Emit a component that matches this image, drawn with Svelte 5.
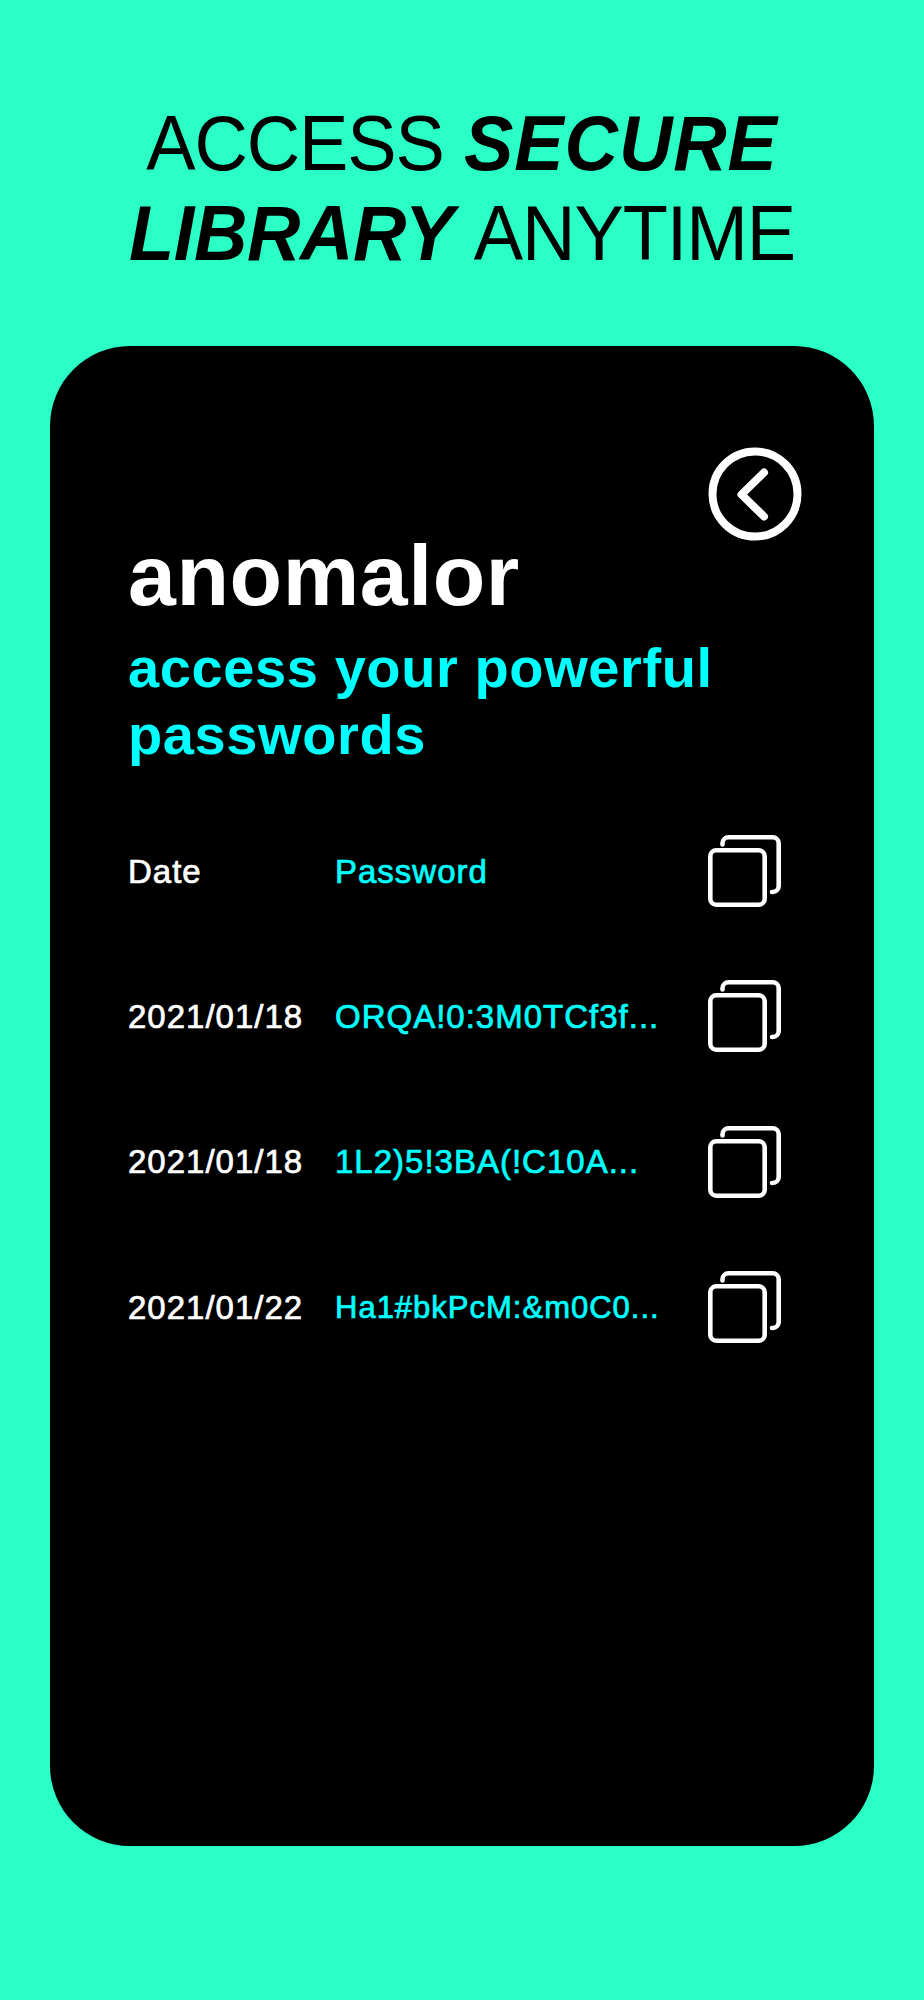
<script>
  const rows = [
    { date: 'Date', password: 'Password' },
    { date: '2021/01/18', password: 'ORQA!0:3M0TCf3f...' },
    { date: '2021/01/18', password: '1L2)5!3BA(!C10A...' },
    { date: '2021/01/22', password: 'Ha1#bkPcM:&m0C0...', small: true }
  ];
</script>

<div class="page">
  <h1 class="headline">
    <span class="tight">ACCESS</span> <em class="wide">SECURE</em><br />
    <em>LIBRARY</em> <span class="tight">ANYTIME</span>
  </h1>

  <main class="card">
    <div class="top">
      <button class="back" aria-label="Back">
        <svg width="94" height="94" viewBox="0 0 94 94" fill="none" stroke="#fff" stroke-linecap="round" stroke-linejoin="round">
          <circle cx="47" cy="47" r="42.500" stroke-width="8" />
          <path d="M56 25.500 33.500 47.500 56 69.500" stroke-width="8" />
        </svg>
      </button>
    </div>

    <h2 class="brand">anomalor</h2>
    <p class="tagline">access your powerful passwords</p>

    <div class="list">
      {#each rows as row}
        <div class="row">
          <span class="date">{row.date}</span>
          <span class="password" class:small={row.small}>{row.password}</span>
          <button class="copy" aria-label="Copy">
            <svg width="73" height="72" viewBox="0 0 73 72" fill="none" stroke="#fff" stroke-width="4.6" stroke-linecap="round" stroke-linejoin="round">
              <rect x="2.3" y="15.300" width="54.400" height="54.400" rx="6" />
              <path d="M14.500 9.500V8.300a6 6 0 0 1 6-6H64.700a6 6 0 0 1 6 6V51a6 6 0 0 1-6 6H64" />
            </svg>
          </button>
        </div>
      {/each}
    </div>
  </main>
</div>

<style>
  :global(body) {
    margin: 0;
    background: #2affc6;
  }

  .page {
    height: 2000px;
    box-sizing: border-box;
    padding: 98.500px 50px 0;
    background: #2affc6;
    font-family: "Liberation Sans", Arial, sans-serif;
  }

  /* the reference face is narrower than Liberation, so stretch it a little */
  .headline {
    margin: 0;
    height: 170px;
    font-size: 74px;
    line-height: 85px;
    font-weight: 400;
    letter-spacing: -0.4px;
    text-align: center;
    color: #000;
    transform: scaleY(1.05);
    transform-origin: top;
  }

  .headline em {
    font-weight: 700;
    font-style: italic;
  }

  .headline .tight {
    letter-spacing: -1.1px;
  }

  .headline .wide {
    letter-spacing: 0.9px;
  }

  .card {
    margin-top: 77.500px;
    height: 1500px;
    box-sizing: border-box;
    padding: 101px 72px 0 78px;
    border-radius: 80px;
    background: #000;
  }

  .top {
    display: flex;
    justify-content: flex-end;
    height: 94px;
  }

  .back,
  .copy {
    display: block;
    padding: 0;
    border: 0;
    background: none;
  }

  .brand {
    margin: -16px 0 0;
    font-size: 86px;
    line-height: 100px;
    font-weight: 700;
    letter-spacing: 0.6px;
    color: #fff;
  }

  .tagline {
    margin: 9px 0 0;
    font-size: 56px;
    line-height: 67px;
    font-weight: 700;
    letter-spacing: 0.6px;
    color: #0ff;
  }

  .list {
    margin-top: 31px;
  }

  .row {
    display: flex;
    align-items: center;
    height: 145.300px;
    font-size: 33px;
    letter-spacing: 1px;
    -webkit-text-stroke: 0.7px currentColor;
  }

  .date {
    width: 207px;
    color: #fff;
  }

  .password {
    flex: 1;
    color: #0ff;
    white-space: nowrap;
  }

  .password.small {
    font-size: 31px;
  }

  .copy {
    margin: 2px 21px 0 0;
  }
</style>
